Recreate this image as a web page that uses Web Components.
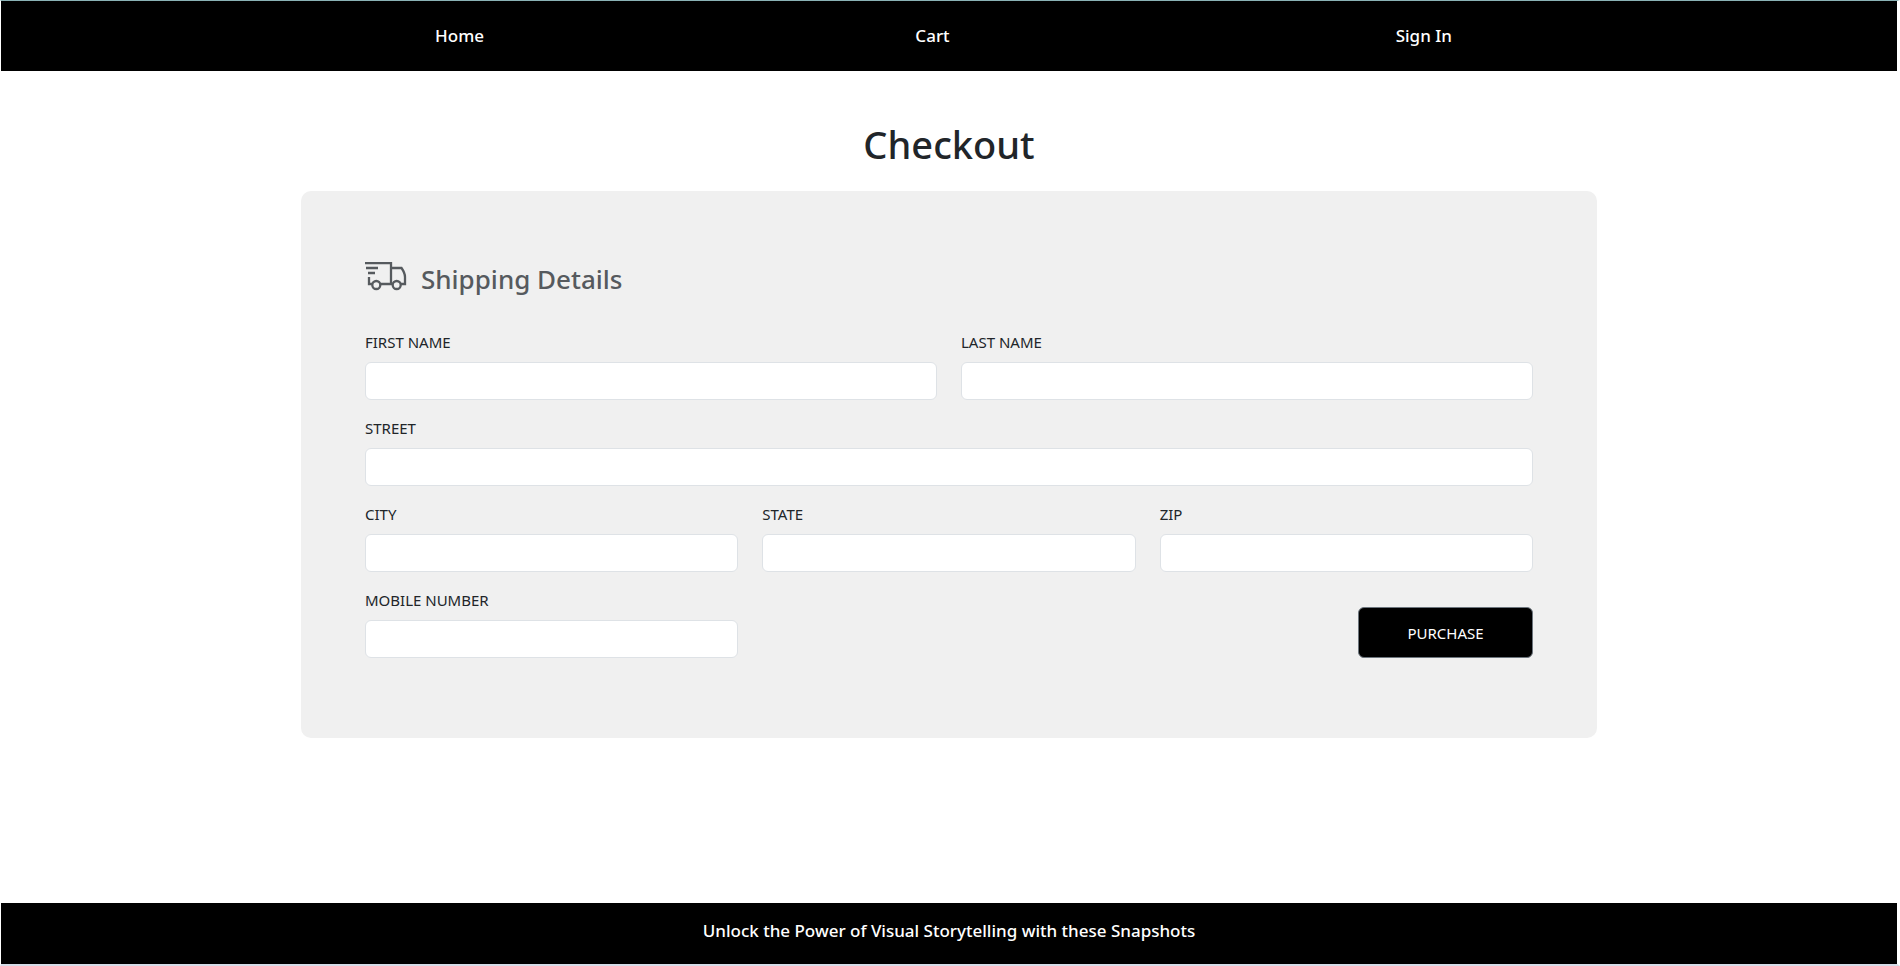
<!DOCTYPE html>
<html lang="en">
<head>
<meta charset="utf-8">
<meta name="viewport" content="width=device-width, initial-scale=1">
<title>Checkout</title>
<style>
  html { background: #fff; }
  body {
    margin: 0;
    font: 400 15px/24px "Noto Sans", "Open Sans", sans-serif;
    color: #212529;
  }
</style>
</head>
<body>
<shop-page>
  <site-nav slot="header">
    <nav-link href="#home">Home</nav-link>
    <nav-link href="#cart">Cart</nav-link>
    <nav-link href="#signin">Sign In</nav-link>
  </site-nav>
  <checkout-view></checkout-view>
  <site-footer slot="footer">Unlock the Power of Visual Storytelling with these Snapshots</site-footer>
</shop-page>

<script>
  const define = (name, html, setup) => {
    const template = document.createElement('template');
    template.innerHTML = html;
    customElements.define(name, class extends HTMLElement {
      constructor() {
        super();
        this.attachShadow({ mode: 'open' }).append(template.content.cloneNode(true));
      }
      connectedCallback() {
        if (setup) setup(this, this.shadowRoot);
      }
    });
  };

  define('shop-page', `
    <style>
      :host {
        box-sizing: border-box;
        display: flex;
        flex-direction: column;
        min-height: 100vh;
        border: 1px solid #fff;
        border-top-color: #8ab2b5;
        border-right-width: 3px;
        border-bottom: 2px solid #d6dce8;
      }
      main { flex: 1; }
    </style>
    <slot name="header"></slot>
    <main><slot></slot></main>
    <slot name="footer"></slot>
  `);

  define('site-nav', `
    <style>
      :host { display: block; background: #000; }
      nav {
        display: grid;
        grid-template-columns: repeat(3, 1fr);
        align-items: center;
        width: 76%;
        min-height: 70px;
        margin: 0 auto;
      }
    </style>
    <nav><slot></slot></nav>
  `);

  define('nav-link', `
    <style>
      :host { display: block; padding-left: 43%; }
      a { color: #fff; font-size: 17px; font-weight: 500; text-decoration: none; }
    </style>
    <a><slot></slot></a>
  `, (host, root) => { root.querySelector('a').href = host.getAttribute('href'); });

  define('site-footer', `
    <style>
      :host { display: block; background: #000; color: #fff; text-align: center; }
      footer { padding: 16px 16px 21px; font-size: 17px; font-weight: 500; }
    </style>
    <footer><slot></slot></footer>
  `);

  define('truck-icon', `
    <style>
      :host { display: block; width: 42px; height: 34px; }
      svg { display: block; }
    </style>
    <svg width="42" height="34" viewBox="0 1 42 34" fill="none" stroke="#565a5e" stroke-width="2.300" aria-hidden="true">
      <path d="M0 2H26V23M26 7H36.500Q40 12 40 16V23H36M1 7H13M3 12H10M4 16V23H7M15.500 23H27.500"/>
      <circle cx="11.300" cy="24" r="4"/>
      <circle cx="31.700" cy="24" r="4"/>
    </svg>
  `);

  define('text-field', `
    <style>
      :host { display: block; }
      label { display: block; margin-bottom: 8px; text-transform: uppercase; }
      input {
        box-sizing: border-box;
        display: block;
        width: 100%;
        height: 38px;
        padding: 6px 12px;
        border: 1px solid #dee2e6;
        border-radius: 6px;
        background: #fff;
        color: inherit;
        font: inherit;
      }
    </style>
    <label for="field"><slot></slot></label>
    <input id="field" type="text">
  `, (host, root) => {
    const input = root.querySelector('input');
    input.name = host.getAttribute('name');
    input.type = host.getAttribute('type') || 'text';
  });

  define('submit-button', `
    <style>
      :host { display: block; }
      button {
        box-sizing: border-box;
        display: block;
        width: 175px;
        height: 51px;
        border: 1px solid #6c757d;
        border-radius: 6px;
        background: #000;
        color: #fff;
        font: inherit;
        text-transform: uppercase;
        cursor: pointer;
      }
    </style>
    <button type="submit"><slot></slot></button>
  `);

  define('checkout-view', `
    <style>
      :host {
        box-sizing: border-box;
        display: block;
        max-width: 1320px;
        margin: 0 auto;
        padding: 48px 12px;
      }
      h1 { margin: 0 0 22px; font-size: 38px; line-height: 50px; font-weight: 500; text-align: center; }
      form { padding: 64px 64px 80px; border-radius: 10px; background: #f0f0f0; }
      header { display: flex; align-items: center; gap: 14px; margin-bottom: 27px; color: #565a5e; }
      h2 { margin: 0; font-size: 26px; line-height: 48px; font-weight: 500; }
      .fields { display: grid; grid-template-columns: repeat(6, 1fr); gap: 16px 24px; }
      .half { grid-column: span 3; }
      .full { grid-column: span 6; }
      .third { grid-column: span 2; }
      submit-button { grid-column: span 4; justify-self: end; align-self: end; }
    </style>
    <h1>Checkout</h1>
    <form>
      <header><truck-icon></truck-icon><h2>Shipping Details</h2></header>
      <div class="fields">
        <text-field class="half" name="first-name">First Name</text-field>
        <text-field class="half" name="last-name">Last Name</text-field>
        <text-field class="full" name="street">Street</text-field>
        <text-field class="third" name="city">City</text-field>
        <text-field class="third" name="state">State</text-field>
        <text-field class="third" name="zip">Zip</text-field>
        <text-field class="third" name="mobile" type="tel">Mobile Number</text-field>
        <submit-button>Purchase</submit-button>
      </div>
    </form>
  `);
</script>
</body>
</html>
